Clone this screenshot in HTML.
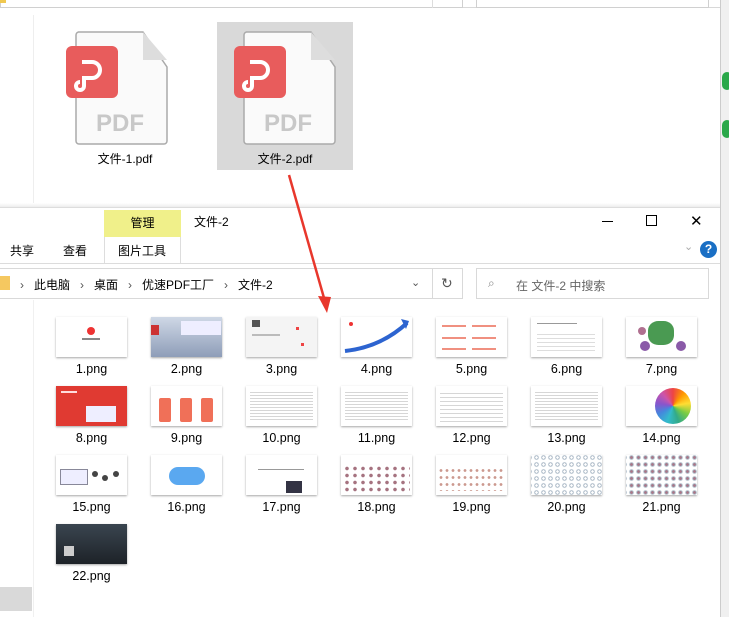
<!DOCTYPE html>
<html><head><meta charset="utf-8"><style>
*{margin:0;padding:0;box-sizing:border-box}
body{width:729px;height:617px;overflow:hidden;position:relative;background:#fff;font-family:"Liberation Sans","Noto Sans CJK SC",sans-serif;color:#000}
.a{position:absolute}
.t{font-size:12px}
.th{position:absolute;width:71px;height:40px;background:#fff;box-shadow:0 1px 2px rgba(0,0,0,.35);overflow:hidden}
.lb{position:absolute;width:95px;text-align:center;font-size:12.5px}
.ln{position:absolute;height:1px;background:#ccc}
</style></head><body>
<div class="a" style="left:0;top:0;width:720px;height:8px;border-bottom:1px solid #d8d8d8"></div>
<div class="a" style="left:0;top:0;width:463px;height:8px;border:1px solid #d0d0d0;border-top:none"></div>
<div class="a" style="left:432px;top:0;width:1px;height:8px;background:#ddd"></div>
<div class="a" style="left:476px;top:0;width:233px;height:8px;border:1px solid #d0d0d0;border-top:none"></div>
<div class="a" style="left:0;top:0;width:6px;height:3px;background:#f0c850"></div>
<div class="a" style="left:33px;top:15px;width:1px;height:190px;background:#eee"></div>
<div class="a" style="left:720px;top:0;width:9px;height:617px;background:#f0f0f0;border-left:1px solid #ccc"></div>
<div class="a" style="left:722px;top:72px;width:10px;height:18px;border-radius:9px;background:#2aa84a"></div>
<div class="a" style="left:722px;top:120px;width:10px;height:18px;border-radius:9px;background:#2aa84a"></div>
<div class="a" style="left:217px;top:22px;width:136px;height:148px;background:#d9d9d9"></div>
<svg class="a" style="left:60px;top:28px" width="110" height="120" viewBox="0 0 110 120">
<path d="M18 4h65l24 35v74a3 3 0 0 1-3 3H19a3 3 0 0 1-3-3V7a3 3 0 0 1 3-3z" fill="#fafafa" stroke="#aaa" stroke-width="1.5"/>
<path d="M83 4v28h24z" fill="#ddd"/>
<rect x="6" y="18" width="52" height="52" rx="6" fill="#e85c5c"/>
<path d="M22 34h10a8 8 0 0 1 0 16h-8v8a4 4 0 1 1-4-4" fill="none" stroke="#fff" stroke-width="4"/>
<text x="60" y="103" text-anchor="middle" font-family="Liberation Sans" font-weight="bold" font-size="24" fill="#c8c8c8">PDF</text>
</svg>
<svg class="a" style="left:228px;top:28px" width="110" height="120" viewBox="0 0 110 120">
<path d="M18 4h65l24 35v74a3 3 0 0 1-3 3H19a3 3 0 0 1-3-3V7a3 3 0 0 1 3-3z" fill="#fafafa" stroke="#aaa" stroke-width="1.5"/>
<path d="M83 4v28h24z" fill="#ddd"/>
<rect x="6" y="18" width="52" height="52" rx="6" fill="#e85c5c"/>
<path d="M22 34h10a8 8 0 0 1 0 16h-8v8a4 4 0 1 1-4-4" fill="none" stroke="#fff" stroke-width="4"/>
<text x="60" y="103" text-anchor="middle" font-family="Liberation Sans" font-weight="bold" font-size="24" fill="#c8c8c8">PDF</text>
</svg>
<div class="a t" style="left:70px;top:150px;width:110px;text-align:center">文件-1.pdf</div>
<div class="a t" style="left:230px;top:150px;width:110px;text-align:center">文件-2.pdf</div>
<div class="a" style="left:0;top:203px;width:720px;height:6px;background:linear-gradient(#fff,#e4e4e4)"></div>
<div class="a" style="left:0;top:207px;width:720px;height:410px;background:#fff;border-top:1px solid #ddd"></div>
<div class="a t" style="left:104px;top:210px;width:77px;height:27px;background:#f0f08a;text-align:center;line-height:27px">管理</div>
<div class="a t" style="left:194px;top:213px">文件-2</div>
<div class="a" style="left:602px;top:221px;width:11px;height:1px;background:#000"></div>
<div class="a" style="left:646px;top:215px;width:11px;height:11px;border:1px solid #000"></div>
<div class="a" style="left:690px;top:212px;font-size:15px">✕</div>
<div class="a t" style="left:10px;top:242px">共享</div>
<div class="a t" style="left:63px;top:242px">查看</div>
<div class="a" style="left:104px;top:237px;width:77px;height:27px;border-left:1px solid #ddd;border-right:1px solid #ddd;background:#fff"></div>
<div class="a t" style="left:118px;top:242px">图片工具</div>
<div class="a" style="left:684px;top:240px;color:#aaa;font-size:11px">⌄</div>
<div class="a" style="left:700px;top:241px;width:17px;height:17px;border-radius:50%;background:#1a6fc4;color:#fff;font-size:12px;font-weight:bold;text-align:center;line-height:17px">?</div>
<div class="ln" style="left:0;top:263px;width:720px;background:#dcdcdc"></div>
<div class="a" style="left:-1px;top:268px;width:464px;height:31px;border:1px solid #d9d9d9"></div>
<div class="a" style="left:432px;top:268px;width:1px;height:31px;background:#d9d9d9"></div>
<div class="a" style="left:0;top:276px;width:10px;height:14px;background:#f5c860"></div>
<div class="a t" style="left:20px;top:276px;color:#555">›&nbsp;&nbsp; <span style="color:#000">此电脑</span> &nbsp;&nbsp;›&nbsp;&nbsp; <span style="color:#000">桌面</span> &nbsp;&nbsp;›&nbsp;&nbsp; <span style="color:#000">优速PDF工厂</span> &nbsp;&nbsp;›&nbsp;&nbsp; <span style="color:#000">文件-2</span></div>
<div class="a" style="left:411px;top:276px;font-size:11px;color:#555">⌄</div>
<div class="a" style="left:441px;top:275px;font-size:14px;color:#555">↻</div>
<div class="a" style="left:476px;top:268px;width:233px;height:31px;border:1px solid #d9d9d9"></div>
<div class="a t" style="left:488px;top:276px;color:#888">⌕</div>
<div class="a t" style="left:516px;top:277px;color:#666">在 文件-2 中搜索</div>
<div class="a" style="left:33px;top:300px;width:1px;height:317px;background:#f0f0f0"></div>
<div class="a" style="left:0;top:587px;width:32px;height:24px;background:#d9d9d9"></div>

<div class="th" style="left:56px;top:317px"><div class="a" style="left:31px;top:10px;width:8px;height:8px;border-radius:50%;background:#e33"></div><div class="a" style="left:26px;top:21px;width:18px;height:2px;background:#888"></div></div>
<div class="th" style="left:151px;top:317px;background:linear-gradient(#cfd8e6,#8e9db8)"><div class="a" style="left:0;top:8px;width:8px;height:10px;background:#c33"></div><div class="a" style="left:30px;top:4px;width:40px;height:14px;background:#eef"></div></div>
<div class="th" style="left:246px;top:317px;background:#f4f4f4"><div class="a" style="left:6px;top:3px;width:8px;height:7px;background:#555"></div><div class="a" style="left:6px;top:17px;width:28px;height:2px;background:#bbb"></div><div class="a" style="left:50px;top:10px;width:3px;height:3px;background:#e44"></div><div class="a" style="left:55px;top:26px;width:3px;height:3px;background:#e44"></div></div>
<div class="th" style="left:341px;top:317px"><svg width="71" height="40"><path d="M4 34 Q40 30 66 6" stroke="#2d64d0" stroke-width="4" fill="none"/><path d="M60 2l8 2-3 8z" fill="#2d64d0"/><circle cx="10" cy="7" r="2" fill="#e33"/></svg></div>
<div class="th" style="left:436px;top:317px"><div class="a" style="left:6px;top:8px;width:24px;height:2px;background:#f09080"></div><div class="a" style="left:36px;top:8px;width:24px;height:2px;background:#f09080"></div><div class="a" style="left:6px;top:20px;width:24px;height:2px;background:#f09080"></div><div class="a" style="left:36px;top:20px;width:24px;height:2px;background:#f09080"></div><div class="a" style="left:6px;top:31px;width:24px;height:2px;background:#f09080"></div><div class="a" style="left:36px;top:31px;width:24px;height:2px;background:#f09080"></div></div>
<div class="th" style="left:531px;top:317px"><div class="a" style="left:6px;top:6px;width:40px;height:1px;background:#999"></div><div class="a" style="left:6px;top:14px;width:58px;height:20px;background:repeating-linear-gradient(#fff 0 3px,#ddd 3px 4px)"></div></div>
<div class="th" style="left:626px;top:317px"><div class="a" style="left:22px;top:4px;width:26px;height:24px;border-radius:40%;background:#4a9a52"></div><div class="a" style="left:14px;top:24px;width:10px;height:10px;border-radius:50%;background:#8a5aa8"></div><div class="a" style="left:50px;top:24px;width:10px;height:10px;border-radius:50%;background:#8a5aa8"></div><div class="a" style="left:12px;top:10px;width:8px;height:8px;border-radius:50%;background:#b07090"></div></div>
<div class="th" style="left:56px;top:386px;background:#e03a32"><div class="a" style="left:30px;top:20px;width:30px;height:16px;background:#eef"></div><div class="a" style="left:5px;top:5px;width:16px;height:2px;background:#fdd"></div></div>
<div class="th" style="left:151px;top:386px"><div class="a" style="left:8px;top:12px;width:12px;height:24px;background:#f07058;border-radius:2px"></div><div class="a" style="left:29px;top:12px;width:12px;height:24px;background:#f07058;border-radius:2px"></div><div class="a" style="left:50px;top:12px;width:12px;height:24px;background:#f07058;border-radius:2px"></div></div>
<div class="th" style="left:246px;top:386px"><div class="a" style="left:4px;top:4px;width:63px;height:32px;background:repeating-linear-gradient(#fff 0 2px,#ccc 2px 3px);opacity:.8"></div></div>
<div class="th" style="left:341px;top:386px"><div class="a" style="left:4px;top:4px;width:63px;height:32px;background:repeating-linear-gradient(#fff 0 2px,#ccc 2px 3px);opacity:.8"></div></div>
<div class="th" style="left:436px;top:386px"><div class="a" style="left:4px;top:4px;width:63px;height:32px;background:repeating-linear-gradient(#fff 0 3px,#ccc 3px 4px);opacity:.8"></div></div>
<div class="th" style="left:531px;top:386px"><div class="a" style="left:4px;top:4px;width:63px;height:32px;background:repeating-linear-gradient(#fff 0 2px,#ccc 2px 3px);opacity:.8"></div></div>
<div class="th" style="left:626px;top:386px"><div class="a" style="left:29px;top:2px;width:36px;height:36px;border-radius:50%;background:conic-gradient(#e44,#f90,#fd3,#7c4,#3a8,#3bc,#48d,#85c,#c5a,#e44)"></div></div>
<div class="th" style="left:56px;top:455px"><div class="a" style="left:4px;top:14px;width:28px;height:16px;border:1px solid #889;background:#eef"></div><div class="a" style="left:36px;top:16px;width:6px;height:6px;border-radius:50%;background:#444"></div><div class="a" style="left:46px;top:20px;width:6px;height:6px;border-radius:50%;background:#444"></div><div class="a" style="left:57px;top:16px;width:6px;height:6px;border-radius:50%;background:#444"></div></div>
<div class="th" style="left:151px;top:455px"><div class="a" style="left:18px;top:12px;width:36px;height:18px;border-radius:9px;background:#5aa8f0"></div></div>
<div class="th" style="left:246px;top:455px"><div class="a" style="left:12px;top:14px;width:46px;height:1px;background:#999"></div><div class="a" style="left:40px;top:26px;width:16px;height:12px;background:#334"></div></div>
<div class="th" style="left:341px;top:455px"><div class="a" style="left:2px;top:10px;width:67px;height:28px;background:radial-gradient(circle,#845 1.6px,transparent 2px) 0 0/8px 7px;opacity:.75"></div></div>
<div class="th" style="left:436px;top:455px"><div class="a" style="left:2px;top:12px;width:67px;height:24px;background:radial-gradient(circle,#a54 1.2px,transparent 1.6px) 0 0/6px 7px;opacity:.6"></div></div>
<div class="th" style="left:531px;top:455px;background:radial-gradient(circle,#fff 1.2px,#9ab 1.5px,transparent 2.8px) 2px 6px/7px 7px #fff"></div>
<div class="th" style="left:626px;top:455px;background:radial-gradient(circle,#a78 1.2px,#9ab 1.5px,transparent 2.8px) 2px 6px/7px 7px #fff"></div>
<div class="th" style="left:56px;top:524px;background:linear-gradient(#3a4550,#1d2228)"><div class="a" style="left:8px;top:22px;width:10px;height:10px;background:#ccc"></div></div>

<div class="lb" style="left:44px;top:362px">1.png</div>
<div class="lb" style="left:139px;top:362px">2.png</div>
<div class="lb" style="left:234px;top:362px">3.png</div>
<div class="lb" style="left:329px;top:362px">4.png</div>
<div class="lb" style="left:424px;top:362px">5.png</div>
<div class="lb" style="left:519px;top:362px">6.png</div>
<div class="lb" style="left:614px;top:362px">7.png</div>
<div class="lb" style="left:44px;top:431px">8.png</div>
<div class="lb" style="left:139px;top:431px">9.png</div>
<div class="lb" style="left:234px;top:431px">10.png</div>
<div class="lb" style="left:329px;top:431px">11.png</div>
<div class="lb" style="left:424px;top:431px">12.png</div>
<div class="lb" style="left:519px;top:431px">13.png</div>
<div class="lb" style="left:614px;top:431px">14.png</div>
<div class="lb" style="left:44px;top:500px">15.png</div>
<div class="lb" style="left:139px;top:500px">16.png</div>
<div class="lb" style="left:234px;top:500px">17.png</div>
<div class="lb" style="left:329px;top:500px">18.png</div>
<div class="lb" style="left:424px;top:500px">19.png</div>
<div class="lb" style="left:519px;top:500px">20.png</div>
<div class="lb" style="left:614px;top:500px">21.png</div>
<div class="lb" style="left:44px;top:569px">22.png</div>

<svg class="a" style="left:0;top:0" width="729" height="617"><path d="M289 175 L324 298" stroke="#e8372c" stroke-width="2.5"/><path d="M318 296 L331 297 L327 313 Z" fill="#e8372c"/></svg>
</body></html>
